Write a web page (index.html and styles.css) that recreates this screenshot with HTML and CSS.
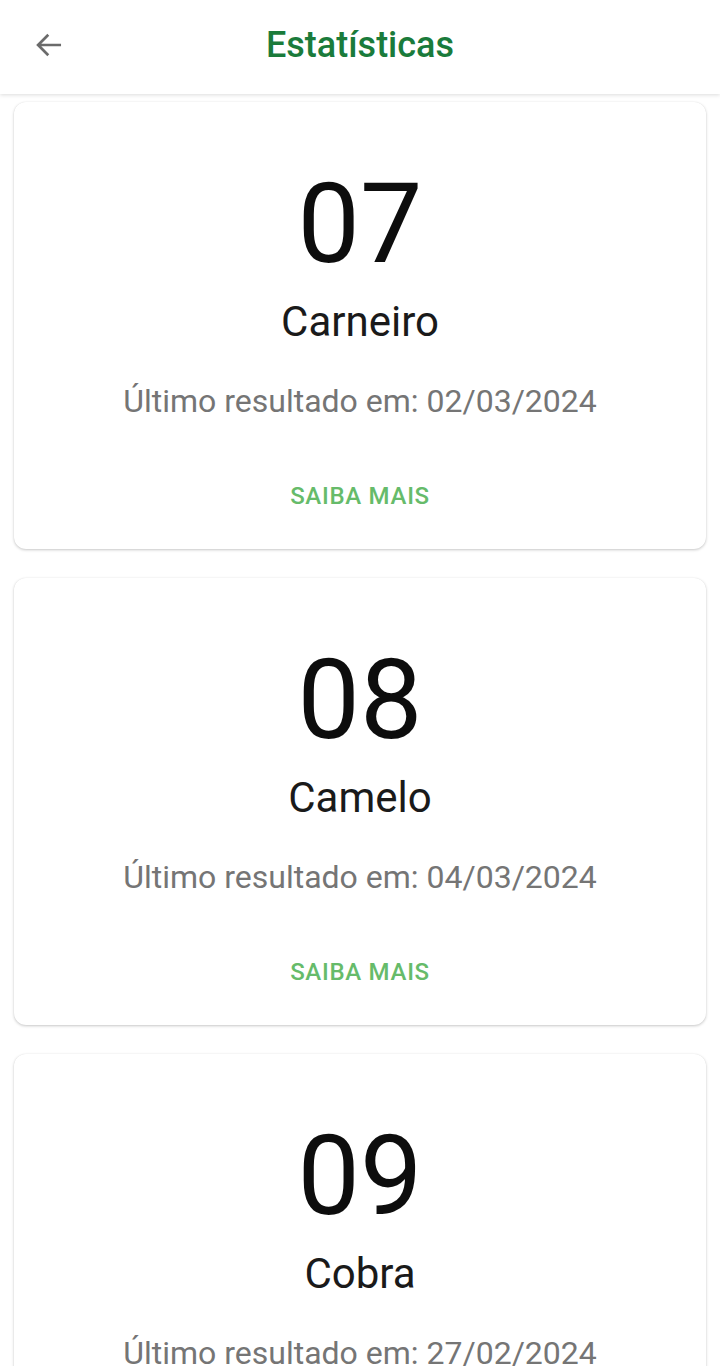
FILE: index.html
```html
<!DOCTYPE html>
<html lang="pt">
<head>
<meta charset="utf-8">
<title>Estatísticas</title>
<link rel="stylesheet" href="styles.css">
</head>
<body>
<header class="topbar">
  <button class="back" aria-label="Voltar">
    <svg width="34" height="34" viewBox="0 0 24 24"><path d="M20.5 12H4.5M11.5 4.8L4.3 12l7.2 7.2" fill="none" stroke="#6b6b6b" stroke-width="1.9"/></svg>
  </button>
  <h1 class="title">Estatísticas</h1>
  <span></span>
</header>
<main class="list">
  <section class="card">
    <div class="num">07</div>
    <div class="name">Carneiro</div>
    <div class="date">Último resultado em: 02/03/2024</div>
    <button class="more">SAIBA MAIS</button>
  </section>
  <section class="card">
    <div class="num">08</div>
    <div class="name">Camelo</div>
    <div class="date">Último resultado em: 04/03/2024</div>
    <button class="more">SAIBA MAIS</button>
  </section>
  <section class="card">
    <div class="num">09</div>
    <div class="name">Cobra</div>
    <div class="date">Último resultado em: 27/02/2024</div>
    <button class="more">SAIBA MAIS</button>
  </section>
</main>
</body>
</html>
```
FILE: styles.css
```css
* { box-sizing: border-box; }
html, body { margin: 0; padding: 0; background: #fff; }
body { font-family: Roboto, "Liberation Sans", sans-serif; color: #111; }

.topbar {
  height: 94px;
  display: grid;
  grid-template-columns: 1fr auto 1fr;
  align-items: center;
  background: #fff;
  box-shadow: 0 1px 4px rgba(0,0,0,0.14);
  position: relative;
  z-index: 1;
}
.back {
  justify-self: start;
  margin-left: 32px;
  margin-top: -4px;
  width: 34px; height: 34px;
  padding: 0; border: 0; background: none;
  display: flex;
}
.title {
  margin: 0;
  margin-top: -4px;
  font-size: 36px;
  font-weight: 500;
  color: #1a7b3b;
  line-height: 1;
}

.list {
  padding: 8px 14px;
  display: flex;
  flex-direction: column;
  gap: 29px;
}
.card {
  background: #fff;
  border-radius: 12px;
  box-shadow: 0 1px 3px rgba(0,0,0,0.22), 0 0 1px rgba(0,0,0,0.08);
  padding: 63px 16px 41px;
  display: flex;
  flex-direction: column;
  align-items: center;
  text-align: center;
}
.num {
  font-size: 111px;
  line-height: 118px;
  color: #0d0d0d;
}
.name {
  margin-top: 18px;
  font-size: 42px;
  line-height: 42px;
  color: #1a1a1a;
}
.date {
  margin-top: 42px;
  font-size: 32px;
  line-height: 32px;
  color: #757575;
}
.more {
  margin-top: 67px;
  font-family: inherit;
  font-size: 24px;
  line-height: 24px;
  font-weight: 500;
  letter-spacing: 0.7px;
  color: #66bb6a;
  background: none;
  border: 0;
  padding: 0;
}
```
